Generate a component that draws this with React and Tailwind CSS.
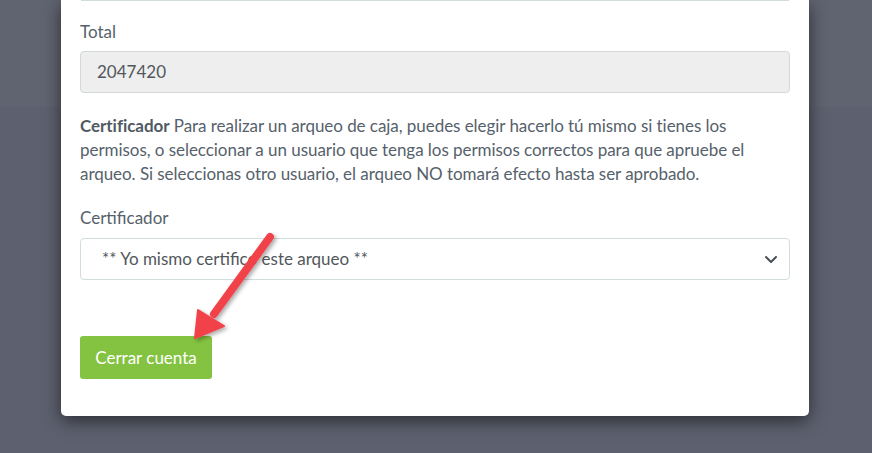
export default function App() {
  return (
    <div
      className="relative w-[872px] h-[453px] overflow-hidden bg-[#5d616f]"
      style={{ fontFamily: '"Lato", "Open Sans", sans-serif' }}
    >
      <div className="absolute inset-x-0 top-0 h-[107px] bg-[#606470]" />
      <div className="relative ml-[61px] w-[748px] bg-white rounded-b-[5px] shadow-[0_5px_18px_rgba(0,0,0,0.55)] px-[19px] pb-[37px] text-[17px] text-[#56616b]">
        <div className="mx-[1px] h-px bg-[#d2dcdd]" />
        <div className="mt-[19px] leading-[24px]">Total</div>
        <div className="mt-[7px] h-[42px] rounded-[4px] border border-[#d3d8da] bg-[#eeeeee] px-4 flex items-center text-[#52575c]">
          2047420
        </div>
        <p className="mt-[21px] leading-[24px] tracking-[-0.05px]">
          <span className="font-bold text-[#4f5a63]">Certificador</span> Para realizar un arqueo de caja, puedes elegir hacerlo tú mismo si tienes los
          <br />
          permisos, o seleccionar a un usuario que tenga los permisos correctos para que apruebe el
          <br />
          arqueo. Si seleccionas otro usuario, el arqueo NO tomará efecto hasta ser aprobado.
        </p>
        <div className="mt-[20px] leading-[24px]">Certificador</div>
        <div className="mt-[8px] h-[42px] rounded-[4px] border border-[#d2dcdd] bg-white pl-[21px] pr-[11px] flex items-center justify-between text-[#52575c]">
          <span>** Yo mismo certifico este arqueo **</span>
          <svg width="14" height="10" viewBox="0 0 14 10" fill="none">
            <path d="M2 3 L7 8 L12 3" stroke="#4a4f55" strokeWidth="2" strokeLinecap="round" strokeLinejoin="round" />
          </svg>
        </div>
        <button className="mt-[56px] h-[43px] w-[132px] rounded-[3px] bg-[#84c341] text-white text-[17px] flex items-center justify-center">
          Cerrar cuenta
        </button>
      </div>
      <svg className="absolute left-0 top-0" width="872" height="453" viewBox="0 0 872 453">
        <defs>
          <filter id="sh" x="-20%" y="-20%" width="140%" height="140%">
            <feDropShadow dx="2" dy="2" stdDeviation="2" floodColor="#000" floodOpacity="0.35" />
          </filter>
        </defs>
        <g filter="url(#sh)">
          <line x1="270" y1="237" x2="214" y2="314" stroke="#f2434a" strokeWidth="8" strokeLinecap="round" />
          <polygon points="195,338 198,310 224,326" fill="#f2434a" stroke="#f2434a" strokeWidth="2" strokeLinejoin="round" />
        </g>
      </svg>
    </div>
  );
}
